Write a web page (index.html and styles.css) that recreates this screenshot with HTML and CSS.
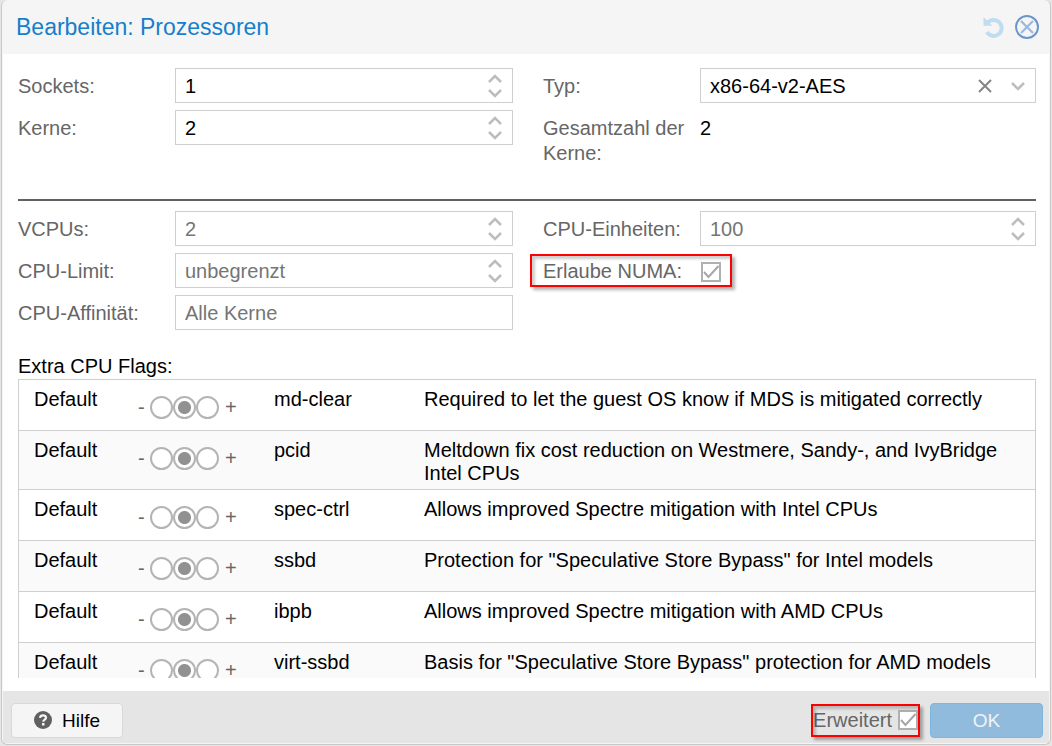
FILE: index.html
```html
<!DOCTYPE html>
<html lang="de">
<head>
<meta charset="utf-8">
<title>Bearbeiten: Prozessoren</title>
<link rel="stylesheet" href="styles.css">
</head>
<body>
<svg class="defs" aria-hidden="true">
  <symbol id="up" viewBox="0 0 14 10"><path d="M1 8 7 2 13 8" fill="none" stroke="currentColor" stroke-width="2.500"/></symbol>
  <symbol id="down" viewBox="0 0 14 10"><path d="M1 2 7 8 13 2" fill="none" stroke="currentColor" stroke-width="2.500"/></symbol>
</svg>
<form class="window">
  <header class="titlebar">
    <h1 class="title">Bearbeiten: Prozessoren</h1>
    <button type="button" class="tool reset" aria-label="Zurücksetzen">
      <svg width="22" height="22" viewBox="0 0 22 22"><path d="M5.500 6.800A8 8 0 1 1 4.800 16" fill="none" stroke="currentColor" stroke-width="4"/><path d="M1.500 1v8.800h8.800z" fill="currentColor"/></svg>
    </button>
    <button type="button" class="tool close" aria-label="Schließen">
      <svg width="26" height="26" viewBox="0 0 26 26"><circle cx="13" cy="13" r="11" fill="none" stroke="#6a96ca" stroke-width="2"/><path d="M7 7l12 12M19 7 7 19" stroke="#9ab8e2" stroke-width="2.200"/></svg>
    </button>
  </header>

  <main class="content">
    <section class="fields basic">
      <div class="field">
        <label for="sockets">Sockets:</label>
        <div class="box"><input id="sockets" value="1"><span class="spin"><button type="button" aria-label="Mehr"><svg><use href="#up"/></svg></button><button type="button" aria-label="Weniger"><svg><use href="#down"/></svg></button></span></div>
      </div>
      <div class="field">
        <label for="type">Typ:</label>
        <div class="box"><select id="type"><option>x86-64-v2-AES</option></select><button type="button" class="clear" aria-label="Leeren"><svg width="14" height="14" viewBox="0 0 14 14"><path d="M1 1l12 12M13 1 1 13" stroke="currentColor" stroke-width="2"/></svg></button><span class="arrow"><svg><use href="#down"/></svg></span></div>
      </div>
      <div class="field">
        <label for="cores">Kerne:</label>
        <div class="box"><input id="cores" value="2"><span class="spin"><button type="button" aria-label="Mehr"><svg><use href="#up"/></svg></button><button type="button" aria-label="Weniger"><svg><use href="#down"/></svg></button></span></div>
      </div>
      <div class="field">
        <label for="total">Gesamtzahl der Kerne:</label>
        <output id="total" class="value">2</output>
      </div>
    </section>
    <hr class="divider">
    <section class="fields advanced">
      <div class="field">
        <label for="vcpus">VCPUs:</label>
        <div class="box"><input id="vcpus" placeholder="2"><span class="spin"><button type="button" aria-label="Mehr"><svg><use href="#up"/></svg></button><button type="button" aria-label="Weniger"><svg><use href="#down"/></svg></button></span></div>
      </div>
      <div class="field">
        <label for="units">CPU-Einheiten:</label>
        <div class="box"><input id="units" placeholder="100"><span class="spin"><button type="button" aria-label="Mehr"><svg><use href="#up"/></svg></button><button type="button" aria-label="Weniger"><svg><use href="#down"/></svg></button></span></div>
      </div>
      <div class="field">
        <label for="limit">CPU-Limit:</label>
        <div class="box"><input id="limit" placeholder="unbegrenzt"><span class="spin"><button type="button" aria-label="Mehr"><svg><use href="#up"/></svg></button><button type="button" aria-label="Weniger"><svg><use href="#down"/></svg></button></span></div>
      </div>
      <div class="field numa">
        <label for="numa">Erlaube NUMA:</label>
        <input type="checkbox" class="check" id="numa" checked>
        <span class="marker"></span>
      </div>
      <div class="field">
        <label for="affinity">CPU-Affinität:</label>
        <div class="box"><input id="affinity" placeholder="Alle Kerne"></div>
      </div>
    </section>

    <h2 class="flags-title" id="flags-title">Extra CPU Flags:</h2>
    <div class="flags">
      <table aria-labelledby="flags-title">
        <colgroup><col class="c-state"><col class="c-radio"><col class="c-name"><col></colgroup>
        <tbody>
          <tr><td>Default</td><td><div class="tri"><span>-</span><input type="radio" name="f1" aria-label="md-clear aus"><input type="radio" name="f1" aria-label="md-clear Default" checked><input type="radio" name="f1" aria-label="md-clear an"><span class="plus">+</span></div></td><td>md-clear</td><td>Required to let the guest OS know if MDS is mitigated correctly</td></tr>
          <tr><td>Default</td><td><div class="tri"><span>-</span><input type="radio" name="f2" aria-label="pcid aus"><input type="radio" name="f2" aria-label="pcid Default" checked><input type="radio" name="f2" aria-label="pcid an"><span class="plus">+</span></div></td><td>pcid</td><td>Meltdown fix cost reduction on Westmere, Sandy-, and IvyBridge Intel CPUs</td></tr>
          <tr><td>Default</td><td><div class="tri"><span>-</span><input type="radio" name="f3" aria-label="spec-ctrl aus"><input type="radio" name="f3" aria-label="spec-ctrl Default" checked><input type="radio" name="f3" aria-label="spec-ctrl an"><span class="plus">+</span></div></td><td>spec-ctrl</td><td>Allows improved Spectre mitigation with Intel CPUs</td></tr>
          <tr><td>Default</td><td><div class="tri"><span>-</span><input type="radio" name="f4" aria-label="ssbd aus"><input type="radio" name="f4" aria-label="ssbd Default" checked><input type="radio" name="f4" aria-label="ssbd an"><span class="plus">+</span></div></td><td>ssbd</td><td>Protection for "Speculative Store Bypass" for Intel models</td></tr>
          <tr><td>Default</td><td><div class="tri"><span>-</span><input type="radio" name="f5" aria-label="ibpb aus"><input type="radio" name="f5" aria-label="ibpb Default" checked><input type="radio" name="f5" aria-label="ibpb an"><span class="plus">+</span></div></td><td>ibpb</td><td>Allows improved Spectre mitigation with AMD CPUs</td></tr>
          <tr><td>Default</td><td><div class="tri"><span>-</span><input type="radio" name="f6" aria-label="virt-ssbd aus"><input type="radio" name="f6" aria-label="virt-ssbd Default" checked><input type="radio" name="f6" aria-label="virt-ssbd an"><span class="plus">+</span></div></td><td>virt-ssbd</td><td>Basis for "Speculative Store Bypass" protection for AMD models</td></tr>
        </tbody>
      </table>
    </div>
  </main>

  <footer class="footer">
    <button type="button" class="btn help">
      <svg width="18" height="18" viewBox="0 0 18 18"><circle cx="9" cy="9" r="9" fill="#606060"/><path d="M6 6.800C6.200 5 7.400 4.300 9 4.300c1.700 0 3 .9 3 2.400 0 2-2.700 2-2.700 4" fill="none" stroke="#f5f5f5" stroke-width="2.200"/><path d="M8 12h2.500v2.400H8z" fill="#f5f5f5"/></svg>
      Hilfe
    </button>
    <div class="extended">
      <label for="extended">Erweitert</label>
      <input type="checkbox" class="check" id="extended" checked>
      <span class="marker"></span>
    </div>
    <button type="submit" class="btn ok">OK</button>
  </footer>
</form>
</body>
</html>
```
FILE: styles.css
```css
* { box-sizing: border-box; }

body {
  margin: 0;
  background: #e6e6e6;
  font-family: "Liberation Sans", Arial, sans-serif;
  font-size: 20px;
  line-height: 25px;
  color: #000;
}

button, input, select { font: inherit; color: inherit; }
button { padding: 0; border: 0; background: none; }
svg { display: block; }
.defs { position: absolute; width: 0; height: 0; }

.window {
  display: flex;
  flex-direction: column;
  height: calc(100vh - 1px);
  margin: 0 1px;
  border: solid #c8c8c8;
  border-width: 0 1px 1px;
  border-radius: 6px;
  background: #f5f5f5;
  overflow: hidden;
}

.titlebar {
  display: flex;
  align-items: center;
  gap: 10px;
  height: 54px;
  padding: 0 10px 0 14px;
}
.title { flex: 1; margin: 0; font-size: 23px; font-weight: normal; color: #157fcc; }
.reset { color: #bfdcf0; }

.content {
  display: flex;
  flex: 1;
  flex-direction: column;
  min-height: 0;
  margin: 0 1px;
  padding: 14px 13px 13px 15px;
  background: #fff;
}

.fields {
  display: grid;
  grid-template-columns: 495fr 493fr;
  gap: 7px 30px;
}
.field { position: relative; display: flex; align-items: flex-start; }
.field > label { width: 157px; padding: 6px 15px 0 0; color: #666; }

.box {
  display: flex;
  flex: 1;
  align-items: center;
  min-width: 0;
  height: 35px;
  border: 1px solid #cfcfcf;
  background: #fff;
}
.box input, .box select {
  flex: 1;
  min-width: 0;
  height: 33px;
  padding: 1px 9px 0;
  border: 0;
  outline: 0;
  background: none;
  appearance: none;
}
.box input::placeholder { color: #757575; opacity: 1; }
.spin, .arrow { display: flex; flex-direction: column; gap: 4px; padding: 0 10px; color: #bdbdbd; }
.spin svg, .arrow svg { width: 14px; height: 10px; }
.clear { padding: 0 9px; color: #858585; }
.value { padding-top: 6px; }

.divider { width: 100%; height: 2px; margin: 32px 0 10px; border: 0; background: #606060; }
.basic { padding-bottom: 1px; }

.check {
  appearance: none;
  width: 20px;
  height: 20px;
  margin: 0;
  border: 2px solid #b0b0b0;
  background: #fff;
}
.check:checked {
  background-image: url("data:image/svg+xml,%3Csvg xmlns='http://www.w3.org/2000/svg' viewBox='0 0 16 16'%3E%3Cpath d='M1 8l4.500 5L15.500 2' fill='none' stroke='%23a6a6a6' stroke-width='2'/%3E%3C/svg%3E");
}
.numa .check { margin: 9px 1px 0; }
.marker {
  position: absolute;
  border: 2px solid #ff0000;
  box-shadow: 3px 3px 3px rgba(0, 0, 0, .3), inset 3px 3px 3px rgba(0, 0, 0, .2);
  pointer-events: none;
}
.numa .marker { top: 1px; left: -13px; width: 202px; height: 33px; }

.flags-title { margin: 24px 0 0; font-size: 20px; font-weight: normal; }
.flags {
  flex: 1;
  min-height: 0;
  overflow: hidden;
  border: solid #cfcfcf;
  border-width: 1px 1px 0;
}
table { width: 100%; border-collapse: separate; border-spacing: 0; table-layout: fixed; line-height: 23px; }
.c-state { width: 104px; }
.c-radio { width: 136px; }
.c-name { width: 150px; }
td { height: 51px; padding: 8px 15px 4px; border-bottom: 1px solid #cfcfcf; vertical-align: top; }
tr:nth-child(even) { background: #fafafa; }

.tri { display: flex; align-items: center; height: 23px; margin-top: 8px; color: #666; }
.tri span { width: 12px; }
.tri .plus { padding-left: 6px; }
.tri input {
  appearance: none;
  flex: none;
  width: 23px;
  height: 23px;
  margin: 0;
  border: 2px solid #b4b4b4;
  border-radius: 50%;
  background: #fff;
}
.tri input:checked { background: radial-gradient(circle, #919191 6px, #fff 7px); }

.footer {
  display: flex;
  align-items: center;
  height: 52px;
  margin: 0 1px 1px;
  padding: 6px 6px 0 8px;
  background: #e5e5e5;
}
.btn {
  display: flex;
  align-items: center;
  justify-content: center;
  gap: 10px;
  height: 35px;
  border-radius: 4px;
  font-size: 19px;
}
.help { width: 112px; border: 1px solid #d8d8d8; background: #f5f5f5; }
.ok { width: 113px; border: 1px solid #7fb6de; background: #91bbdd; color: #f2f2f2; }
.extended {
  position: relative;
  display: flex;
  align-items: center;
  gap: 6px;
  margin: 0 12px 0 auto;
  color: #666;
}
.extended .marker { inset: -4px -2px; }
```
